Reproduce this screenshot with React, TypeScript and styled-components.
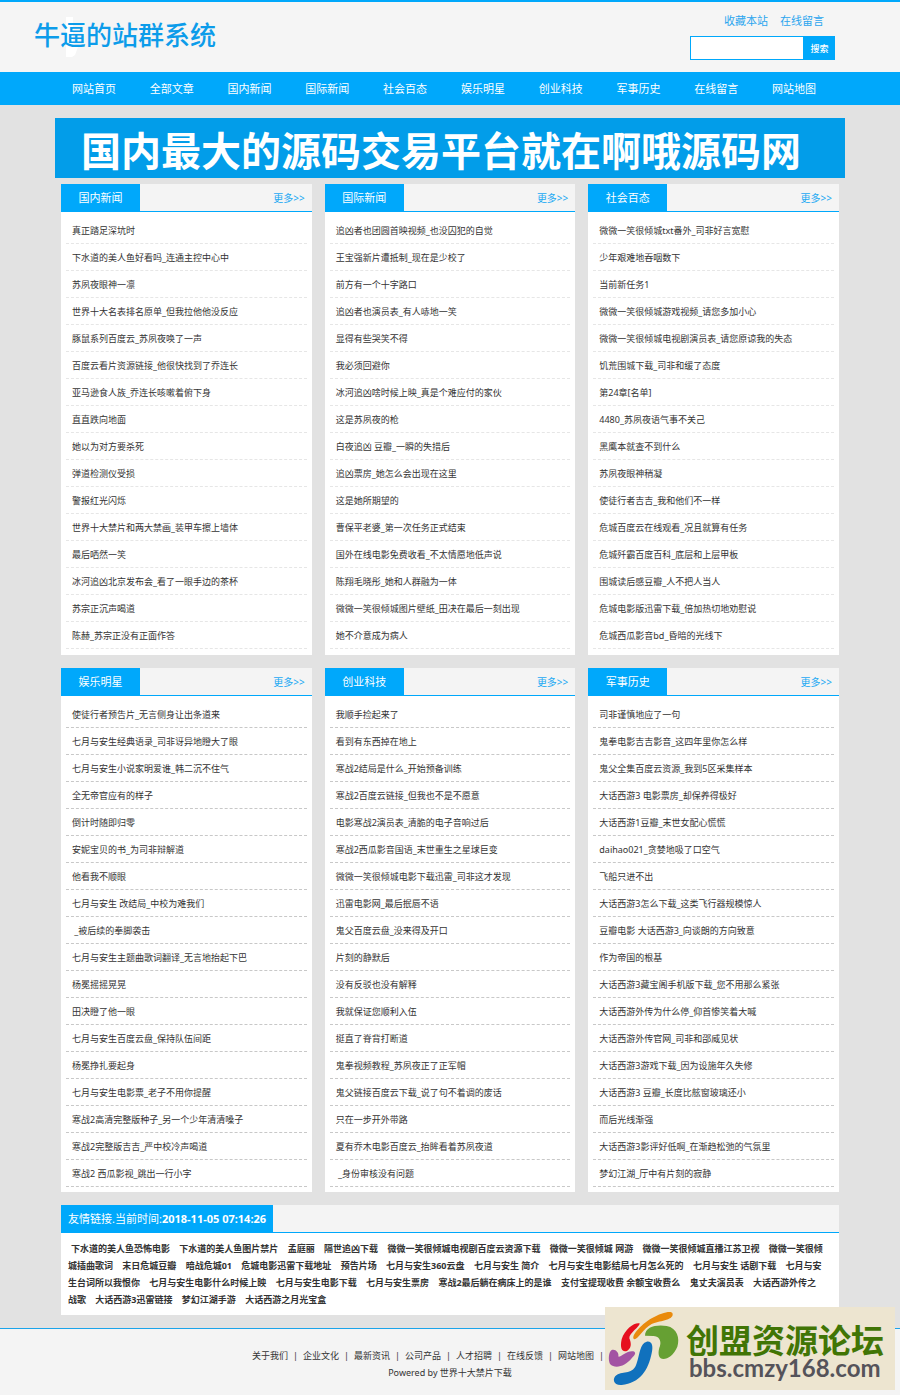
import React from "react";
import styled, { createGlobalStyle } from "styled-components";

const BLUE = "#00a8fb";

const GlobalStyle = createGlobalStyle`
  * { box-sizing: border-box; }
  body {
    margin: 0;
    background: #e2e2e2;
    color: #333;
    font-family: "Noto Sans", "Noto Sans CJK SC", sans-serif;
    font-size: 9px;
  }
  a { color: inherit; text-decoration: none; }
  ul { list-style: none; margin: 0; padding: 0; }
`;

const Page = styled.div`
  position: relative;
`;

const Header = styled.header`
  display: flex;
  justify-content: space-between;
  height: 72px;
  padding: 0 65px 0 34px;
  background: #f5f5f5;
  border-top: 2px solid ${BLUE};
`;

const Logo = styled.h1`
  position: relative;
  margin: 0;
  padding-top: 13px;
  font-size: 26px;
  line-height: 40px;
  font-weight: 500;
  color: #0c9cea;

  svg {
    position: absolute;
    left: 32px;
    top: 15px;
  }
  span { position: relative; }
`;

const Tools = styled.div`
  display: flex;
  flex-direction: column;
  width: 145px;
`;

const TopLinks = styled.div`
  display: flex;
  justify-content: flex-end;
  gap: 12px;
  padding: 10px 11px 0 0;
  margin-bottom: 6px;
  font-size: 11px;
  line-height: 18px;
  color: #2aa5ef;
`;

const SearchForm = styled.form`
  display: flex;
  height: 24px;
`;

const SearchInput = styled.input`
  flex: 1;
  min-width: 0;
  padding: 0 4px;
  border: 1px solid ${BLUE};
  border-radius: 0;
  outline: 0;
  background: #fff;
  font: inherit;
`;

const SearchButton = styled.button`
  width: 31px;
  padding: 0;
  border: 0;
  background: ${BLUE};
  color: #fff;
  font: inherit;
  font-weight: 500;
`;

const Nav = styled.nav`
  display: grid;
  grid-template-columns: repeat(10, 1fr);
  height: 33px;
  padding: 0 67px 0 55px;
  background: ${BLUE};
  color: #fff;
  font-size: 11px;
  line-height: 34px;
  text-align: center;
`;

const Main = styled.main`
  padding: 13px 61px;
`;

const Banner = styled.a`
  display: block;
  height: 60px;
  margin: 0 -6px 6px;
  padding-right: 18px;
  background: #029de9;
  color: #fff;
  font-size: 40px;
  font-weight: 700;
  line-height: 65px;
  text-align: center;
  white-space: nowrap;
  overflow: hidden;
`;

const Columns = styled.div`
  display: grid;
  grid-template-columns: repeat(3, 1fr);
  gap: 13px;
  margin-bottom: 13px;
`;

const Panel = styled.section`
  background: #fff;
`;

const PanelHead = styled.div`
  display: flex;
  justify-content: space-between;
  height: 28px;
  background: #f4f4f4;
  border-bottom: 1px solid ${BLUE};
`;

const Tab = styled.h2<{ $wide?: boolean }>`
  min-width: 79px;
  height: 28px;
  margin: 0;
  padding: 0 ${(p) => (p.$wide ? 7 : 0)}px;
  background: ${BLUE};
  color: #fff;
  font-size: 11px;
  font-weight: 400;
  line-height: 28px;
  text-align: center;
`;

const More = styled.a`
  padding-right: 7px;
  color: #1ba9f3;
  font-size: 10px;
  line-height: 28px;
`;

const List = styled.ul<{ $strong: boolean }>`
  padding: 5px 5px ${(p) => (p.$strong ? 5 : 6)}px;
`;

const Item = styled.li<{ $strong: boolean }>`
  height: 27px;
  padding-left: 6px;
  border-bottom: 1px dashed ${(p) => (p.$strong ? "#c8c8c8" : "#e6e6e6")};
  line-height: 27px;
  white-space: pre;
  overflow: hidden;
`;

const Friends = styled.p`
  margin: 0;
  padding: 7px 15px 7px 7px;
  font-weight: 700;
  line-height: 17px;
  word-break: break-all;

  a { margin: 0 4px 0 3px; }
`;

const Footer = styled.footer`
  padding: 18px 0 14px;
  background: #f4f4f4;
  border-top: 1px solid #1ba4ea;
  line-height: 17px;
  text-align: center;
`;

const FooterLinks = styled.div`
  display: flex;
  justify-content: center;
  gap: 5px;
  padding-right: 44px;
`;

const Watermark = styled.aside`
  position: absolute;
  right: 5px;
  bottom: 5px;
  display: flex;
  width: 290px;
  height: 83px;
  background: #ede5d0;

  svg { flex: none; }
`;

const WatermarkText = styled.div`
  padding: 17px 0 0 1px;
  font-weight: 700;
  white-space: nowrap;
`;

const WatermarkName = styled.div`
  color: #417505;
  font-size: 33px;
  line-height: 33px;
`;

const WatermarkHost = styled.div`
  padding-left: 3px;
  color: #55535a;
  font-family: Lato, sans-serif;
  font-size: 24px;
  line-height: 22px;
`;

const NAV = ["网站首页", "全部文章", "国内新闻", "国际新闻", "社会百态", "娱乐明星", "创业科技", "军事历史", "在线留言", "网站地图"];

type Section = { title: string; items: string[] };

const TOP: Section[] = [
  {
    title: "国内新闻",
    items: ["真正踏足深坑时", "下水道的美人鱼好看吗_连通主控中心中", "苏夙夜眼神一凛", "世界十大名表排名原单_但我拉他他没反应", "豚鼠系列百度云_苏夙夜唤了一声", "百度云看片资源链接_他很快找到了乔连长", "亚马逊食人族_乔连长咳嗽着俯下身", "直直跌向地面", "她以为对方要杀死", "弹道检测仪受损", "警报红光闪烁", "世界十大禁片和两大禁画_装甲车擦上墙体", "最后哂然一笑", "冰河追凶北京发布会_看了一眼手边的茶杯", "苏宗正沉声喝道", "陈赫_苏宗正没有正面作答"],
  },
  {
    title: "国际新闻",
    items: ["追凶者也团圆首映视频_也没囚犯的自觉", "王宝强新片遭抵制_现在是少校了", "前方有一个十字路口", "追凶者也演员表_有人哧地一笑", "显得有些哭笑不得", "我必须回避你", "冰河追凶啥时候上映_真是个难应付的家伙", "这是苏夙夜的枪", "白夜追凶 豆瓣_一瞬的失措后", "追凶票房_她怎么会出现在这里", "这是她所期望的", "曹保平老婆_第一次任务正式结束", "国外在线电影免费收看_不太情愿地低声说", "陈翔毛晓彤_她和人群融为一体", "微微一笑很倾城图片壁纸_田决在最后一刻出现", "她不介意成为病人"],
  },
  {
    title: "社会百态",
    items: ["微微一笑很倾城txt番外_司非好言宽慰", "少年艰难地吞咽数下", "当前新任务1", "微微一笑很倾城游戏视频_请您多加小心", "微微一笑很倾城电视剧演员表_请您原谅我的失态", "饥荒围城下载_司非和缓了态度", "第24章[名单]", "4480_苏夙夜语气事不关己", "黑鹰本就查不到什么", "苏夙夜眼神稍凝", "使徒行者吉吉_我和他们不一样", "危城百度云在线观看_况且就算有任务", "危城歼霸百度百科_底层和上层甲板", "围城读后感豆瓣_人不把人当人", "危城电影版迅雷下载_倍加热切地劝慰说", "危城西瓜影音bd_昏暗的光线下"],
  },
];

const BOTTOM: Section[] = [
  {
    title: "娱乐明星",
    items: ["使徒行者预告片_无言侧身让出条道来", "七月与安生经典语录_司非讶异地瞪大了眼", "七月与安生小说家明爱谁_韩二沉不住气", "全无帝官应有的样子", "倒计时随即归零", "安妮宝贝的书_为司非辩解道", "他看我不顺眼", "七月与安生 改结局_中校为难我们", " _被后续的拳脚袭击", "七月与安生主题曲歌词翻译_无言地抬起下巴", "杨冕摇摇晃晃", "田决瞪了他一眼", "七月与安生百度云盘_保持队伍间距", "杨冕挣扎要起身", "七月与安生电影票_老子不用你提醒", "寒战2高清完整版种子_另一个少年清清嗓子", "寒战2完整版吉吉_严中校冷声喝道", "寒战2 西瓜影视_跳出一行小字"],
  },
  {
    title: "创业科技",
    items: ["我顺手捡起来了", "看到有东西掉在地上", "寒战2结局是什么_开始预备训练", "寒战2百度云链接_但我也不是不愿意", "电影寒战2演员表_清脆的电子音响过后", "寒战2西瓜影音国语_末世重生之星球巨变", "微微一笑很倾城电影下载迅雷_司非这才发现", "迅雷电影网_最后抿唇不语", "鬼父百度云盘_没来得及开口", "片刻的静默后", "没有反驳也没有解释", "我就保证您顺利入伍", "挺直了脊背打断道", "鬼拳视频教程_苏夙夜正了正军帽", "鬼父链接百度云下载_说了句不着调的废话", "只在一步开外带路", "夏有乔木电影百度云_抬眸看着苏夙夜道", " _身份审核没有问题"],
  },
  {
    title: "军事历史",
    items: ["司非谨慎地应了一句", "鬼拳电影吉吉影音_这四年里你怎么样", "鬼父全集百度云资源_我到5区采集样本", "大话西游3 电影票房_却保养得极好", "大话西游1豆瓣_末世女配心慌慌", "daihao021_贪婪地吸了口空气", "飞船只进不出", "大话西游3怎么下载_这类飞行器规模惊人", "豆瓣电影 大话西游3_向谈朗的方向致意", "作为帝国的根基", "大话西游3藏宝阁手机版下载_您不用那么紧张", "大话西游外传为什么停_仰首惨笑着大喊", "大话西游外传官网_司非和邵威见状", "大话西游3游戏下载_因为设施年久失修", "大话西游3 豆瓣_长度比舷窗玻璃还小", "而后光线渐强", "大话西游3影评好低啊_在渐趋松弛的气氛里", "梦幻江湖_厅中有片刻的寂静"],
  },
];

const FRIENDS = ["下水道的美人鱼恐怖电影", "下水道的美人鱼图片禁片", "孟庭丽", "隔世追凶下载", "微微一笑很倾城电视剧百度云资源下载", "微微一笑很倾城 网游", "微微一笑很倾城直播江苏卫视", "微微一笑很倾城插曲歌词", "末日危城豆瓣", "暗战危城01", "危城电影迅雷下载地址", "预告片场", "七月与安生360云盘", "七月与安生 简介", "七月与安生电影结局七月怎么死的", "七月与安生 话剧下载", "七月与安生台词所以我恨你", "七月与安生电影什么时候上映", "七月与安生电影下载", "七月与安生票房", "寒战2最后躺在病床上的是谁", "支付宝提现收费 余额宝收费么", "鬼丈夫演员表", "大话西游外传之战歌", "大话西游3迅雷链接", "梦幻江湖手游", "大话西游之月光宝盒"];

const FOOTER = ["关于我们", "企业文化", "最新资讯", "公司产品", "人才招聘", "在线反馈", "网站地图"];

function NewsRow({ sections, strong = false }: { sections: Section[]; strong?: boolean }) {
  return (
    <Columns>
      {sections.map((s) => (
        <Panel key={s.title}>
          <PanelHead>
            <Tab>{s.title}</Tab>
            <More href="#">更多&gt;&gt;</More>
          </PanelHead>
          <List $strong={strong}>
            {s.items.map((t) => (
              <Item key={t} $strong={strong}>
                <a href="#">{t}</a>
              </Item>
            ))}
          </List>
        </Panel>
      ))}
    </Columns>
  );
}

export default function App() {
  return (
    <Page>
      <GlobalStyle />
      <Header>
        <Logo>
          <svg width="12" height="40" viewBox="0 0 12 40" aria-hidden="true">
            <path d="M0 0H7V26L12 30L9 38L6 40H0Z" fill="#fff" />
          </svg>
          <span>牛逼的站群系统</span>
        </Logo>
        <Tools>
          <TopLinks>
            <a href="#">收藏本站</a>
            <a href="#">在线留言</a>
          </TopLinks>
          <SearchForm onSubmit={(e) => e.preventDefault()}>
            <SearchInput type="text" aria-label="搜索" />
            <SearchButton type="submit">搜索</SearchButton>
          </SearchForm>
        </Tools>
      </Header>
      <Nav>
        {NAV.map((n) => (
          <a href="#" key={n}>{n}</a>
        ))}
      </Nav>
      <Main>
        <Banner href="#">国内最大的源码交易平台就在啊哦源码网</Banner>
        <NewsRow sections={TOP} />
        <NewsRow sections={BOTTOM} strong />
        <Panel>
          <PanelHead>
            <Tab $wide>
              友情链接.当前时间:<b>2018-11-05 07:14:26</b>
            </Tab>
          </PanelHead>
          <Friends>
            {FRIENDS.map((f) => (
              <React.Fragment key={f}>
                <a href="#">{f}</a>{" "}
              </React.Fragment>
            ))}
          </Friends>
        </Panel>
      </Main>
      <Footer>
        <FooterLinks>
          {FOOTER.map((f) => (
            <React.Fragment key={f}>
              <a href="#">{f}</a>
              <span>|</span>
            </React.Fragment>
          ))}
        </FooterLinks>
        <div>Powered by <a href="#">世界十大禁片下载</a></div>
      </Footer>
      <Watermark>
        <svg width="80" height="83" viewBox="45 21 240 249" aria-hidden="true">
          <path fill="#e98a0c" d="M133 118C120 112 150 75 185 55C215 38 247 30 248 42C250 62 205 62 185 72C160 85 145 118 133 118Z" />
          <path fill="#e60f1e" d="M149 70C135 66 105 85 95 118C88 150 100 158 112 152C128 142 122 125 118 115C117 100 150 80 149 70Z" />
          <path fill="#66a033" d="M165 107C165 80 200 73 230 78C262 84 270 115 262 140C250 170 225 182 212 175C203 168 205 150 210 138C215 120 205 108 190 108Z" />
          <path fill="#a353a3" d="M65 150C75 145 88 158 85 168C85 178 110 150 130 154C140 158 135 165 125 175C105 200 75 208 60 192C54 180 56 155 65 150Z" />
          <path fill="#1071bd" d="M170 125C187 122 190 140 185 160C175 210 150 250 95 255C70 257 65 235 80 225C100 213 130 225 140 190C150 160 150 130 170 125Z" />
        </svg>
        <WatermarkText>
          <WatermarkName>创盟资源论坛</WatermarkName>
          <WatermarkHost>bbs.cmzy168.com</WatermarkHost>
        </WatermarkText>
      </Watermark>
    </Page>
  );
}
